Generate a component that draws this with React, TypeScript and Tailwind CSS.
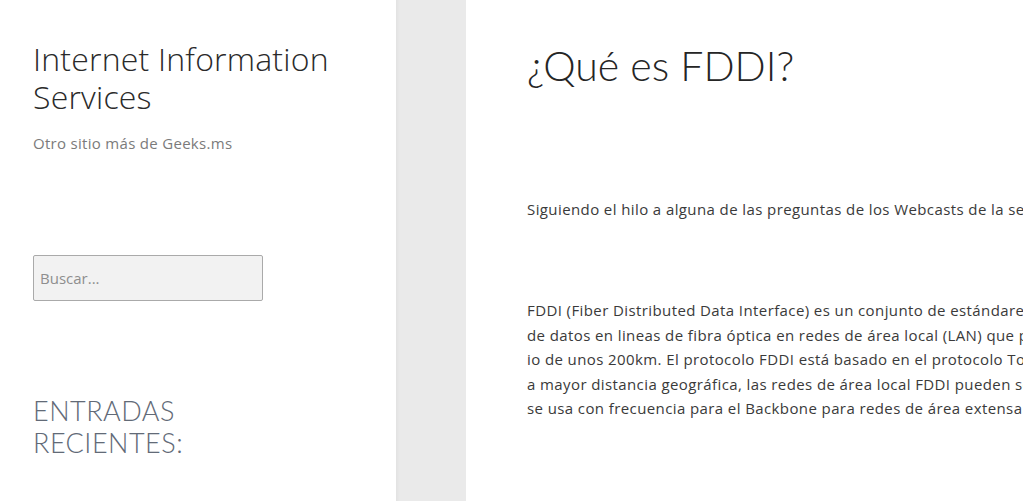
export default function App() {
  const body = "font-['Open_Sans','Lato',sans-serif]";
  return (
    <div className="flex h-[501px] w-[1023px] overflow-hidden bg-white">
      <aside className={`w-[396px] shrink-0 pl-[33px] pt-[40px] ${body}`}>
        <h1 className="text-[32px] font-light leading-[38px] tracking-[0.2px] text-[#2a2a2a]">
          Internet Information
          <br />
          Services
        </h1>
        <p className="mt-[15px] text-[15px] leading-[24px] tracking-[0.3px] text-[#7b7b7b]">Otro sitio más de Geeks.ms</p>
        <div className="mt-[100px] flex h-[46px] w-[230px] items-center rounded-[2px] border border-[#aaaaaa] bg-[#f2f2f2] px-[6px] text-[15px] text-[#8e8e8e]">
          Buscar...
        </div>
        <h2 className="mt-[94px] font-['Lato',sans-serif] text-[27px] font-light uppercase leading-[32px] tracking-[0.5px] text-[#626a77]">
          Entradas
          <br />
          Recientes:
        </h2>
      </aside>
      <div className="w-[70px] shrink-0 bg-[linear-gradient(to_right,#e2e2e2,#eaeaea_4px,#eaeaea)]" />
      <main className={`min-w-0 flex-1 overflow-hidden pl-[61px] pt-[38px] ${body}`}>
        <h1 className="whitespace-nowrap font-['Lato',sans-serif] text-[41px] font-light leading-[56px] text-[#252525]">¿Qué es FDDI?</h1>
        <p className="mt-[103px] whitespace-nowrap text-[15px] leading-[24px] tracking-[0.4px] text-[#3a3a3a]">
          Siguiendo el hilo a alguna de las preguntas de los Webcasts de la serie de IIS 7.0, hoy os traigo esta definición.
        </p>
        <div className="mt-[77px] whitespace-nowrap text-[15px] leading-[24.5px] tracking-[0.4px] text-[#3a3a3a]">
          <div>FDDI (Fiber Distributed Data Interface) es un conjunto de estándares ISO y ANSI para la transmisión</div>
          <div>de datos en lineas de fibra óptica en redes de área local (LAN) que pueden extenderse en un rad</div>
          <div>io de unos 200km. El protocolo FDDI está basado en el protocolo Token Ring. Además de cubrir un</div>
          <div>a mayor distancia geográfica, las redes de área local FDDI pueden soportar a miles de usuarios. FDDI</div>
          <div>se usa con frecuencia para el Backbone para redes de área extensa (WAN).</div>
        </div>
      </main>
    </div>
  );
}
